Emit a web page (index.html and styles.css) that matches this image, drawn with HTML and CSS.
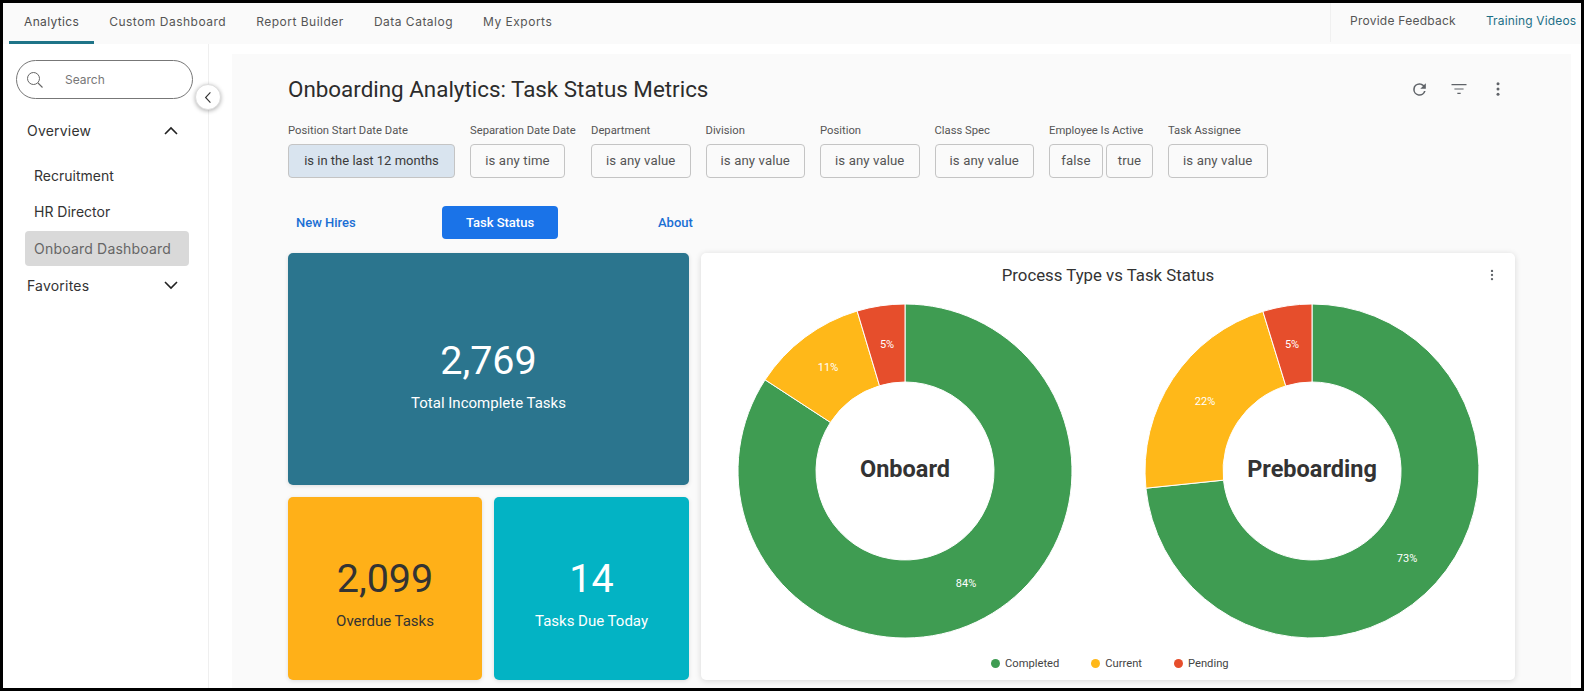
FILE: index.html
```html
<!DOCTYPE html>
<html lang="en">
<head>
<meta charset="utf-8">
<title>Onboarding Analytics</title>
<link rel="stylesheet" href="styles.css">
</head>
<body>
<div class="app">
  <nav class="topnav">
    <div class="tabs">
      <a class="tab active">Analytics</a>
      <a class="tab">Custom Dashboard</a>
      <a class="tab">Report Builder</a>
      <a class="tab">Data Catalog</a>
      <a class="tab">My Exports</a>
    </div>
    <div class="links">
      <a class="link">Provide Feedback</a>
      <a class="link teal">Training Videos</a>
    </div>
  </nav>
  <div class="body">
    <aside class="sidebar">
      <div class="search">
        <svg class="search-icon" viewBox="0 0 18 18" width="18" height="18"><circle cx="7.5" cy="7.5" r="6" fill="none" stroke="#666" stroke-width="1"/><path d="M12 12l4.5 4.5" stroke="#666" stroke-width="1.1" fill="none"/></svg>
        <span>Search</span>
      </div>
      <button class="collapse" aria-label="Collapse">
        <svg viewBox="0 0 10 16" width="8" height="13"><path d="M8 1.5L2 8l6 6.5" fill="none" stroke="#333" stroke-width="1.4"/></svg>
      </button>
      <div class="section overview">
        <span>Overview</span>
        <svg viewBox="0 0 14 9" width="14" height="9"><path d="M1 8l6-6 6 6" fill="none" stroke="#222" stroke-width="1.6"/></svg>
      </div>
      <ul class="menu">
        <li class="item">Recruitment</li>
        <li class="item">HR Director</li>
        <li class="item selected">Onboard Dashboard</li>
      </ul>
      <div class="section favorites">
        <span>Favorites</span>
        <svg viewBox="0 0 14 9" width="14" height="9"><path d="M1 1l6 6 6-6" fill="none" stroke="#222" stroke-width="1.6"/></svg>
      </div>
    </aside>
    <main class="panel">
      <header class="head">
        <h1>Onboarding Analytics: Task Status Metrics</h1>
        <div class="tools">
          <svg viewBox="0 0 24 24" width="19" height="19"><path d="M17.65 6.35A7.96 7.96 0 0 0 12 4a8 8 0 1 0 7.73 10h-2.08A6 6 0 1 1 12 6c1.66 0 3.14.69 4.22 1.78L13 11h7V4l-2.35 2.35z" fill="#5f6368"/></svg>
          <svg viewBox="0 0 24 24" width="20" height="20"><path d="M3 6h18v1.4H3zM6.5 11.3h11v1.4h-11zM10 16.6h4V18h-4z" fill="#5f6368"/></svg>
          <svg viewBox="0 0 24 24" width="18" height="18"><circle cx="12" cy="5" r="2" fill="#5f6368"/><circle cx="12" cy="12" r="2" fill="#5f6368"/><circle cx="12" cy="19" r="2" fill="#5f6368"/></svg>
        </div>
      </header>
      <section class="filters">
        <div class="filter f1"><label>Position Start Date Date</label><div class="chips"><span class="chip on">is in the last 12 months</span></div></div>
        <div class="filter f2"><label>Separation Date Date</label><div class="chips"><span class="chip">is any time</span></div></div>
        <div class="filter"><label>Department</label><div class="chips"><span class="chip val">is any value</span></div></div>
        <div class="filter"><label>Division</label><div class="chips"><span class="chip val">is any value</span></div></div>
        <div class="filter"><label>Position</label><div class="chips"><span class="chip val">is any value</span></div></div>
        <div class="filter"><label>Class Spec</label><div class="chips"><span class="chip val">is any value</span></div></div>
        <div class="filter"><label>Employee Is Active</label><div class="chips"><span class="chip bool">false</span><span class="chip bool">true</span></div></div>
        <div class="filter"><label>Task Assignee</label><div class="chips"><span class="chip val">is any value</span></div></div>
      </section>
      <div class="views">
        <a class="view v1">New Hires</a>
        <a class="view current">Task Status</a>
        <a class="view v3">About</a>
      </div>
      <section class="grid">
        <div class="kpi total"><b>2,769</b><span>Total Incomplete Tasks</span></div>
        <div class="kpi overdue"><b>2,099</b><span>Overdue Tasks</span></div>
        <div class="kpi due"><b>14</b><span>Tasks Due Today</span></div>
        <div class="chart">
          <div class="chart-title">
            <span>Process Type vs Task Status</span>
            <svg class="chart-menu" viewBox="0 0 24 24" width="14" height="14"><circle cx="12" cy="5" r="2" fill="#5f6368"/><circle cx="12" cy="12" r="2" fill="#5f6368"/><circle cx="12" cy="19" r="2" fill="#5f6368"/></svg>
          </div>
          <div class="donuts">
            <svg class="donut" viewBox="0 0 340 340" width="340" height="340">
              <path class="g" d="M170 3A167 167 0 1 1 30.1 78.8L95.45 121.4A89 89 0 1 0 170 81Z"/>
              <path class="y" d="M30.1 78.8A167 167 0 0 1 122.15 10L144.5 84.73A89 89 0 0 0 95.45 121.4Z"/>
              <path class="r" d="M122.15 10A167 167 0 0 1 170 3L170 81A89 89 0 0 0 144.5 84.73Z"/>
              <text class="pct" x="152" y="47">5%</text>
              <text class="pct" x="93" y="70">11%</text>
              <text class="pct" x="231" y="286">84%</text>
              <text class="center" x="170" y="176">Onboard</text>
            </svg>
            <svg class="donut" viewBox="0 0 340 340" width="340" height="340">
              <path class="g" d="M170 3A167 167 0 1 1 3.9 187.2L81.5 179.15A89 89 0 1 0 170 81Z"/>
              <path class="y" d="M3.9 187.2A167 167 0 0 1 120.9 10.4L143.8 84.93A89 89 0 0 0 81.5 179.15Z"/>
              <path class="r" d="M120.9 10.4A167 167 0 0 1 170 3L170 81A89 89 0 0 0 143.8 84.93Z"/>
              <text class="pct" x="150" y="47">5%</text>
              <text class="pct" x="63" y="104">22%</text>
              <text class="pct" x="265" y="261">73%</text>
              <text class="center" x="170" y="176">Preboarding</text>
            </svg>
          </div>
          <ul class="legend">
            <li><i class="dot dg"></i>Completed</li>
            <li><i class="dot dy"></i>Current</li>
            <li><i class="dot dr"></i>Pending</li>
          </ul>
        </div>
      </section>
    </main>
  </div>
</div>
</body>
</html>
```

FILE: styles.css
```css
* { box-sizing: border-box; }
html, body { margin: 0; height: 100%; }
body { background: #000; overflow: hidden; font-family: Roboto, "Liberation Sans", sans-serif; }
.app { margin: 3px; height: 685px; background: #fff; display: flex; flex-direction: column; overflow: hidden; }

.topnav { height: 41px; flex: none; background: #fafafa; display: flex; justify-content: space-between; font-family: Inter, "Liberation Sans", sans-serif; font-size: 12px; color: #555; }
.tabs { display: flex; padding-left: 6px; letter-spacing: .5px; }
.tab { padding: 0 15px; height: 41px; line-height: 37px; border-bottom: 3px solid transparent; }
.tab.active { border-bottom-color: #1f7488; color: #4d4d4d; letter-spacing: .35px; }
.links { display: flex; width: 248px; border-left: 1px solid #f0f0f0; padding-left: 19px; gap: 30px; line-height: 36px; margin-right: 3px; height: 39px; letter-spacing: .25px; }
.link { white-space: nowrap; }
.teal { color: #1d6f86; letter-spacing: .15px; }

.body { flex: 1; display: flex; min-height: 0; }
.sidebar { width: 206px; flex: none; position: relative; border-right: 1px solid #efefef; padding: 16px 0 0 13px; font-family: Inter, "Liberation Sans", sans-serif; color: #333; font-size: 14px; }
.search { width: 177px; height: 39px; border: 1px solid #777; border-radius: 20px; display: flex; align-items: center; padding-left: 9px; color: #777; font-size: 12px; gap: 21px; }
.search-icon { flex: none; }
.collapse { position: absolute; right: -13px; top: 40px; width: 26px; height: 26px; border-radius: 50%; border: 1px solid #ddd; background: #fff; box-shadow: 0 1px 4px rgba(0,0,0,.3); display: flex; align-items: center; justify-content: center; padding: 0; }
.section { display: flex; justify-content: space-between; align-items: center; width: 151px; margin-left: 11px; color: #333; letter-spacing: .2px; }
.section svg { flex: none; }
.overview { margin-top: 20px; height: 22px; }
.menu { list-style: none; margin: 17px 0 0 9px; padding: 0; width: 164px; }
.item { height: 36px; line-height: 36px; padding-left: 9px; color: #333; white-space: nowrap; }
.item.selected { background: #d9d9d9; color: #666; border-radius: 4px; height: 35px; line-height: 35px; margin-top: 1px; letter-spacing: .2px; }
.favorites { margin-top: 8px; height: 22px; }

.panel { margin: 10px 10px 0 23px; flex: 1; min-width: 0; background: #fafafa; padding: 0 56px 8px 56px; display: flex; flex-direction: column; }
.head { height: 52px; margin-top: 9px; display: flex; align-items: center; justify-content: space-between; }
.head h1 { margin: 0; font-size: 22.4px; font-weight: 400; color: #2c2c2c; white-space: nowrap; }
.tools { display: flex; align-items: center; gap: 20px; margin-right: 8px; }
.filters { display: flex; gap: 15px; margin-top: 9px; }
.filter label { display: block; font-size: 11.25px; line-height: 14px; color: #555; white-space: nowrap; margin-bottom: 6px; }
.chips { display: flex; gap: 3px; }
.chip { display: block; height: 34px; line-height: 32px; border: 1px solid #c4c4c4; border-radius: 4px; text-align: center; font-size: 13.2px; color: #555; white-space: nowrap; padding: 0 15px; letter-spacing: .1px; }
.chip.on { background: #d9e4ef; color: #3a3a3a; width: 167px; padding: 0; font-size: 13px; letter-spacing: 0; }
.f2 { width: 106px; }
.f2 .chip { width: 95px; padding: 0; }
.chip.val { width: 99.5px; padding: 0; }
.chip.bool { width: 54px; padding: 0; }
.chip.bool + .chip.bool { width: 47px; }

.views { display: flex; align-items: center; height: 33px; margin-top: 28px; font-size: 13px; font-weight: 500; color: #1a6fd4; }
.view { white-space: nowrap; }
.v1 { margin-left: 8px; width: 146px; }
.current { width: 116px; height: 33px; line-height: 33px; text-align: center; background: #1a73e8; color: #fff; border-radius: 4px; }
.v3 { margin-left: 100px; }

.grid { flex: 1; margin-top: 14px; display: grid; grid-template-columns: 194px 195px 826px; grid-template-rows: 232px 183px; gap: 12px; }
.kpi { border-radius: 5px; display: flex; flex-direction: column; align-items: center; justify-content: center; color: #fff; box-shadow: 0 1px 4px rgba(0,0,0,.12); padding-top: 6px; }
.kpi b { font-weight: 400; font-size: 39.5px; line-height: 50px; }
.kpi span { font-size: 15px; line-height: 18px; margin-top: 8px; }
.total { grid-column: 1 / span 2; background: #2b758e; padding-top: 9px; }
.overdue { background: #ffb018; color: #333; }
.due { background: #03b3c4; }
.chart { grid-column: 3; grid-row: 1 / span 2; width: 814px; background: #fff; border-radius: 5px; box-shadow: 0 1px 6px rgba(0,0,0,.14); display: flex; flex-direction: column; }
.chart-title { position: relative; height: 48px; padding-top: 12px; text-align: center; font-size: 16.8px; line-height: 20px; color: #333; }
.chart-menu { position: absolute; right: 16px; top: 15px; }
.donuts { display: flex; justify-content: center; gap: 67px; }
.donut { display: block; }
.g { fill: #3f9c52; stroke: #fff; stroke-width: 1; }
.y { fill: #ffb819; stroke: #fff; stroke-width: 1; }
.r { fill: #e64e2c; stroke: #fff; stroke-width: 1; }
.pct { font-size: 11px; fill: #fff; text-anchor: middle; }
.center { font-size: 23.5px; font-weight: 700; fill: #333; text-anchor: middle; }
.legend { list-style: none; margin: 11px 0 0; padding: 0 0 0 290px; display: flex; height: 22px; align-items: center; font-size: 11.2px; color: #444; }
.legend li { display: flex; align-items: center; gap: 5px; white-space: nowrap; margin-right: 32px; }
.dot { width: 9px; height: 9px; border-radius: 50%; display: block; }
.dg { background: #3f9c52; }
.dy { background: #ffb819; }
.dr { background: #e64e2c; }
```
